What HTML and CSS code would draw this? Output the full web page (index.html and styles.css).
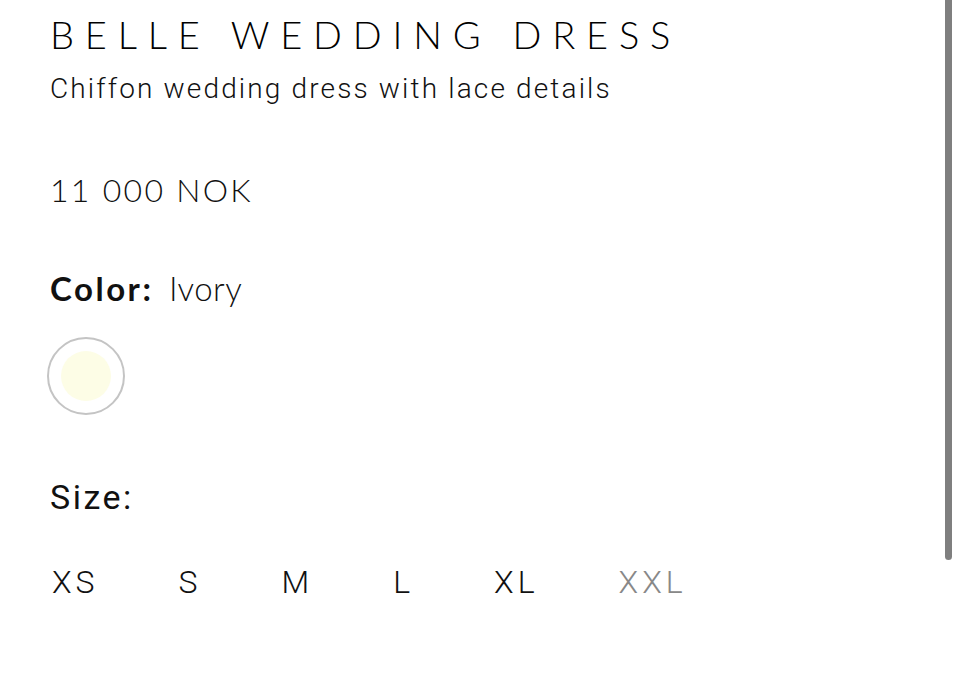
FILE: index.html
```html
<!DOCTYPE html>
<html lang="en">
<head>
    <meta charset="UTF-8">
    <meta name="viewport" content="width=device-width, initial-scale=1.0">
    <title>Belle Wedding Dress</title>
    <link rel="stylesheet" href="styles.css">
</head>
<body>
    <div class="product">
        <h1 class="product-title">BELLE WEDDING DRESS</h1>
        <p class="product-desc">Chiffon wedding dress with lace details</p>

        <p class="product-price">11 000 NOK</p>

        <p class="option-label"><b>Color:</b> Ivory</p>
        <div class="swatches">
            <div class="swatch selected"><span class="swatch-fill"></span></div>
        </div>

        <p class="option-label size-label">Size:</p>
        <div class="sizes">
            <span class="size">XS</span>
            <span class="size">S</span>
            <span class="size">M</span>
            <span class="size">L</span>
            <span class="size">XL</span>
            <span class="size sold-out">XXL</span>
        </div>
    </div>

    <div class="scrollbar"></div>
</body>
</html>
```

FILE: styles.css
```css
body {
    margin: 0;
    background-color: #fff;
    color: #111;
    font-family: Lato, "Liberation Sans", sans-serif;
    overflow: hidden;
}
.product {
    padding: 12px 0 0 50px;
}
.product-title {
    margin: 0;
    font-family: Lato, sans-serif;
    font-weight: 300;
    font-size: 38px;
    line-height: 44px;
    letter-spacing: 10.8px;
    color: #000;
}
.product-desc {
    margin: 16px 0 0;
    font-family: Roboto, sans-serif;
    font-weight: 300;
    font-size: 28px;
    line-height: 34px;
    letter-spacing: 2.15px;
}
.product-price {
    margin: 64px 0 0;
    font-size: 32px;
    line-height: 40px;
    letter-spacing: 2.3px;
    font-weight: 300;
}
.option-label {
    margin: 58px 0 0;
    font-size: 33px;
    line-height: 40px;
    font-weight: 300;
    letter-spacing: 0.5px;
}
.option-label b {
    font-weight: 700;
    letter-spacing: 2.5px;
    margin-right: 6px;
}
.swatches {
    display: flex;
    gap: 16px;
    margin: 29px 0 0 -3px;
}
.swatch {
    width: 74px;
    height: 74px;
    border: 2px solid #c4c4c4;
    border-radius: 50%;
    display: flex;
    align-items: center;
    justify-content: center;
}
.swatch-fill {
    width: 50px;
    height: 50px;
    border-radius: 50%;
    background-color: #fdfde6;
}
.size-label {
    margin-top: 62px;
    font-family: Roboto, sans-serif;
    font-weight: 400;
    font-size: 34px;
    letter-spacing: 2.5px;
}
.sizes {
    display: flex;
    gap: 80px;
    margin-top: 47px;
    padding-left: 2px;
    font-family: Roboto, sans-serif;
    font-weight: 300;
    font-size: 32px;
    line-height: 36px;
    letter-spacing: 4px;
}
.sold-out {
    color: #888;
}
.scrollbar {
    position: absolute;
    top: 0;
    left: 945px;
    width: 7px;
    height: 560px;
    border-radius: 0 0 4px 4px;
    background-color: #7f7f7f;
}
```
